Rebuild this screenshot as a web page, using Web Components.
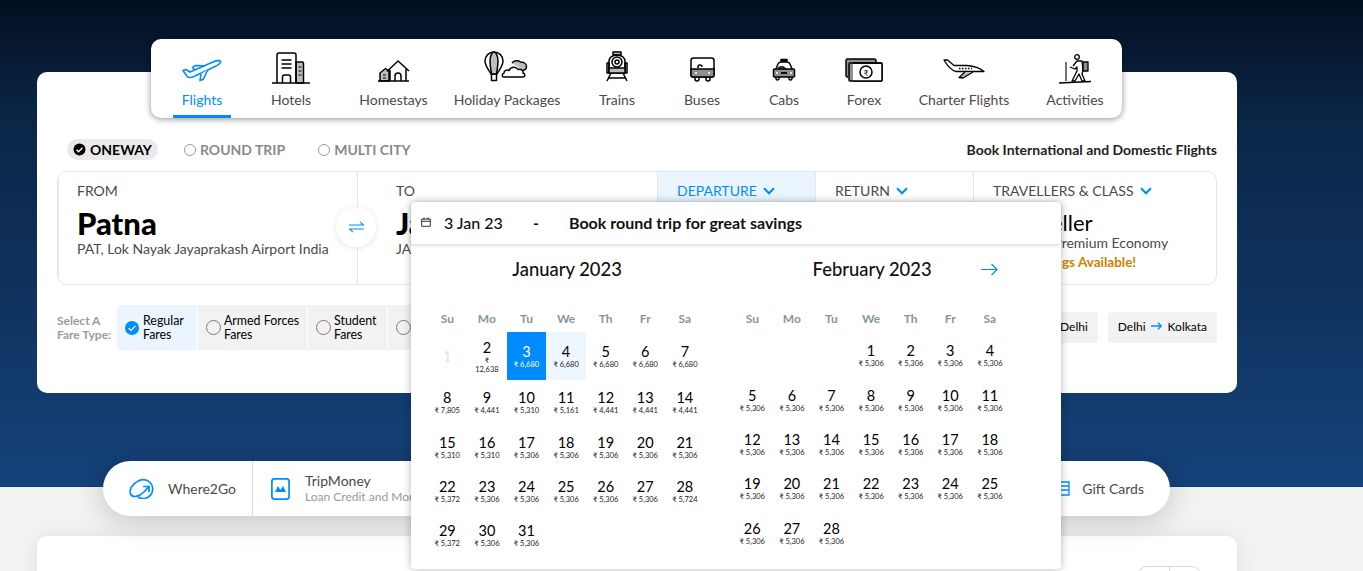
<!DOCTYPE html>
<html lang="en"><head><meta charset="utf-8"><title>Flights</title>
<style>html,body{margin:0;padding:0;background:#f2f2f2;font-family:Lato,"Noto Sans",sans-serif}</style></head>
<body>
<mmt-page></mmt-page>
<script>
const S='#000';
const ICONS={
flights:[40,24,2,`<g fill="none" stroke="#008cff" stroke-width="1.6" stroke-linejoin="round"><path d="M1 12.500 4 11.500 8 14 31 4C34 2.600 38 2 38.600 3.500 39 5.200 35.500 7.300 32.500 8.700L12 18.500C9 19.800 6 19.600 5 18.300Z"/><path d="M13 12.200 10.500 9.400 13.500 7.500 23 7.900"/><path d="M19 16 18 22.600 21 21.600 26 11.500" fill="#fff"/></g>`],
hotels:[38,32,0,`<g fill="none" stroke="${S}" stroke-width="1.500"><path d="M24 10h6a1.500 1.500 0 0 1 1.500 1.500V31H24Z" fill="#bdbdbd"/><path d="M5 31V3a2 2 0 0 1 2-2h15a2 2 0 0 1 2 2v28"/><path d="M9.500 8h10M9.500 12h10M9.500 16h10" stroke-width="1.700"/><path d="M10.500 31v-6a2 2 0 0 1 2-2h4a2 2 0 0 1 2 2v6"/><path d="M26.500 15h3M26.500 19h3M26.500 23h3" stroke-width="1.200"/><path d="M0 31h38"/></g>`],
homestays:[33,22,2,`<g fill="none" stroke="${S}" stroke-width="1.500" stroke-linejoin="round"><path d="M3 13 8.500 8.500 12 11V21H3Z" fill="#bdbdbd"/><path d="M10 11.500 21 1 32 11"/><path d="M13 10V21M29 9V21"/><path d="M18 21v-5a3 3 0 0 1 6 0v5"/><path d="M1 21h31"/><path d="M6 15h3M6 18h3" stroke-width="1.100"/></g>`],
holiday:[46,31,2,`<g fill="none" stroke="${S}" stroke-width="1.500" stroke-linejoin="round"><path d="M10 1C5 1 1 5 1 10c0 5 4 9 6 13h6c2-4 6-8 6-13 0-5-4-9-9-9Z"/><path d="M10 1C8 1 6 5 6 10c0 5 1 9 1.500 13h5C13 19 14 15 14 10c0-5-2-9-4-9Z" fill="#bdbdbd"/><path d="M7.500 23v6.500h5V23"/><path d="M28 12c2-2.500 6-3 8.500-1 3.500 0 6 2 6 4.500 0 2-1.500 3.500-3.500 4" fill="#bdbdbd"/><path d="M20 26c-2.500 0-2-3.500 0-4 0-2.500 3-3.500 5-2.500 1.500-4 7-4.500 9-1 3-1 5.500 1 5 3.500 2.500.5 2.500 4-.5 4Z" fill="#fff"/></g>`],
trains:[24,31,2,`<g fill="none" stroke="${S}" stroke-width="1.500" stroke-linejoin="round"><path d="M8 1h8v3H8Z" fill="#bdbdbd"/><path d="M4 22V10.500C4 7 7 4 12 4s8 3 8 6.500V22Z"/><path d="M2 12h2v10H2ZM20 12h2v10h-2Z"/><circle cx="12" cy="11" r="5"/><circle cx="12" cy="11" r="2"/><path d="M4 17h16v5H4Z" fill="#bdbdbd"/><path d="M6 22 2 30M18 22l4 8M4 27h16"/></g>`],
buses:[25,25,2,`<g fill="none" stroke="${S}" stroke-width="1.500"><rect x="1" y="1" width="23" height="19" rx="2.500"/><path d="M1 12h23v6.500a1.500 1.500 0 0 1-1.500 1.500h-20A1.500 1.500 0 0 1 1 18.500Z" fill="#8f8f8f"/><path d="M5 20v2a2 2 0 0 0 4 0v-2M16 20v2a2 2 0 0 0 4 0v-2"/><path d="M8 11v-1a2 2 0 0 1 4 0"/></g><circle cx="6" cy="16" r="1" fill="#fff"/><circle cx="19" cy="16" r="1" fill="#fff"/>`],
cabs:[24,23,3,`<g fill="none" stroke="${S}" stroke-width="1.500" stroke-linejoin="round"><path d="M9 4V1.500h6V4" fill="${S}"/><path d="M4 11 6 6a3 3 0 0 1 3-2h6a3 3 0 0 1 3 2l2 5"/><path d="M7 9.500c2-1 4-1 5 0l2 1.500h-7Z"/><path d="M2.500 11h19a1 1 0 0 1 1 1v6a1 1 0 0 1-1 1h-19a1 1 0 0 1-1-1v-6a1 1 0 0 1 1-1Z" fill="#8f8f8f"/><path d="M4 19v1.500a1.500 1.500 0 0 0 3 0V19M17 19v1.500a1.500 1.500 0 0 0 3 0V19"/><path d="M9 15h6" stroke-width="1.800"/></g><circle cx="5" cy="15" r="1" fill="#fff"/><circle cx="19" cy="15" r="1" fill="#fff"/>`],
forex:[38,24,2,`<g fill="none" stroke="${S}" stroke-width="1.500"><path d="M3 19H2.500A1.500 1.500 0 0 1 1 17.500V2.500A1.500 1.500 0 0 1 2.500 1h27A1.500 1.500 0 0 1 31 2.500V5" fill="#8f8f8f"/><rect x="4" y="5" width="33" height="18" rx="1" fill="#8f8f8f"/><rect x="8" y="6" width="29" height="17" fill="#fff" stroke="none"/><path d="M8 5h28a1 1 0 0 1 1 1v16a1 1 0 0 1-1 1H8"/><circle cx="21" cy="14" r="6"/></g><text x="21" y="17.500" text-anchor="middle" font-family="Lato,Noto Sans,sans-serif" font-size="8" fill="${S}">₹</text>`],
charter:[42,20,5,`<g fill="none" stroke="${S}" stroke-width="1.300" stroke-linejoin="round"><path d="M1 1 4.500 1 11 6.500 24 6.500C31 7 38 10 41 12.500H13C9 11.500 5 8 1 1Z"/><path d="M22 13 16 18.500 20 19 30 13" fill="#bdbdbd"/></g><path d="M16 9.500h13" stroke="${S}" stroke-width="1.300" stroke-dasharray="1.500 1.500" fill="none"/>`],
activities:[33,30,0,`<g fill="none" stroke="${S}" stroke-width="1.300" stroke-linejoin="round"><circle cx="18" cy="3" r="2.300"/><path d="M24 8h5v9h-5Z" fill="#8f8f8f"/><path d="M14 12 18 7h5l1 9-1 4 3 7h-3l-3-7-4 7h-3l5-10V13l-2 2-5-2"/><path d="M7 8v19" stroke-width="1.100"/><path d="M0 29 32 27.500" stroke-width="1.500"/></g>`]};

class Base extends HTMLElement{
  connectedCallback(){ if(this.shadowRoot) return; this.attachShadow({mode:'open'}).innerHTML=this.render(); }
  a(n,d=''){return this.getAttribute(n)??d}
}
customElements.define('nav-item',class extends Base{render(){
  const [w,h,lift,p]=ICONS[this.a('icon')];const active=this.hasAttribute('active');
  return `<style>
  :host{display:flex;flex:none;flex-direction:column;align-items:center;width:${this.a('w')}px;height:79px;box-sizing:border-box;padding-top:13px;color:${active?'#008cff':'#4a4a4a'};font-size:14px;${active?'border-bottom:3px solid #008cff;':''}}
  .i{height:32px;display:flex;align-items:flex-end;justify-content:center}
  svg{display:block;overflow:visible;margin-bottom:${lift}px}
  .l{margin-top:7px;line-height:17px;white-space:nowrap}
  </style><div class="i"><svg width="${w}" height="${h}" viewBox="0 0 ${w} ${h}">${p}</svg></div><div class="l"><slot></slot></div>`;}});

customElements.define('top-nav',class extends Base{render(){return `<style>
  :host{display:flex;width:971px;height:79px;box-sizing:border-box;padding-left:22px;background:#fff;border-radius:10px;box-shadow:0 1px 6px rgba(0,0,0,.45);margin:0 0 0 151px;position:relative;z-index:2}
  </style><slot></slot>`}});

customElements.define('trip-opt',class extends Base{render(){const on=this.hasAttribute('on');return `<style>
  :host{display:inline-flex;align-items:center;gap:4px;font-weight:700;font-size:14px;height:21px;border-radius:11px;color:${on?'#000':'#8a8a8a'};${on?'background:#eaeaea;padding:0 6px;':''}}
  .r{width:10px;height:10px;border:1px solid #9b9b9b;border-radius:50%;display:block}
  svg{display:block}
  </style>${on?`<svg width="13" height="13" viewBox="0 0 13 13"><circle cx="6.500" cy="6.500" r="6" fill="#000"/><path d="M3.600 6.700 5.600 8.700 9.400 4.800" fill="none" stroke="#fff" stroke-width="1.400"/></svg>`:'<span class="r"></span>'}<slot></slot>`}});

const CHEV=`<svg width="12" height="8" viewBox="0 0 12 8"><path d="M1 1.300 6 6.300 11 1.300" fill="none" stroke="#008cff" stroke-width="2"/></svg>`;
customElements.define('search-field',class extends Base{render(){const act=this.hasAttribute('active');const ch=this.hasAttribute('chevron');return `<style>
  :host{display:block;box-sizing:border-box;flex:none;width:${this.a('w')}px;padding:10px 19px 0;border-left:1px solid #e7e7e7;${act?'background:#eaf5ff;':''}}
  :host(:first-child){border-left:0}
  .l{font-size:14px;line-height:17px;color:${act?'#008cff':'#4a4a4a'};display:flex;align-items:center;gap:6px;white-space:nowrap}
  .m{font-size:${this.a('ms','31')}px;font-weight:${this.a('mw','900')};line-height:34px;color:#000;margin-top:7px;white-space:nowrap}
  .s{font-size:14px;line-height:16px;color:#4a4a4a;margin-top:${this.a('sm','1')}px;margin-left:var(--sx,0);white-space:nowrap}
  ::slotted([slot=x]){font-size:13.500px;font-weight:700;color:#cf8100;line-height:16px;display:block;margin-top:3px;white-space:nowrap}
  </style><div class="l">${this.a('label')}${ch?CHEV:''}</div><div class="m">${this.a('main')}</div><div class="s">${this.a('sub')}</div><slot name="x"></slot>`}});

customElements.define('swap-btn',class extends Base{render(){return `<style>
  :host{position:absolute;left:279px;top:36px;width:40px;height:40px;border-radius:50%;background:#fff;box-shadow:0 1px 7px rgba(0,0,0,.1);display:flex;align-items:center;justify-content:center}
  </style><svg width="15" height="12" viewBox="0 0 15 12"><path d="M0 4H14.500L11 .8M15 8H.5L4 11.200" fill="none" stroke="#008cff" stroke-width="1.100"/></svg>`}});

customElements.define('fare-chip',class extends Base{render(){const on=this.hasAttribute('on');return `<style>
  :host{display:flex;align-items:center;gap:${on?'4px':'3px'};flex:none;box-sizing:border-box;width:${this.a('w')}px;height:45px;padding-left:8px;background:${on?'#eaf5ff':'#f2f2f2'};font-size:12.400px;line-height:14px;color:#000;border-radius:${on?'4px 0 0 4px':'0'}}
  .r{flex:none;width:13px;height:13px;border:1px solid #7a7a7a;border-radius:50%}
  svg{flex:none;display:block}
  .t{padding-top:1px}
  </style>${on?`<svg width="14" height="14" viewBox="0 0 14 14"><circle cx="7" cy="7" r="7" fill="#008cff"/><path d="M3.500 7.200 6 9.500 10.500 4.800" fill="none" stroke="#fff" stroke-width="1.100"/></svg>`:'<span class="r"></span>'}<div class="t"><slot></slot></div>`}});

customElements.define('route-chip',class extends Base{render(){return `<style>
  :host{display:flex;align-items:center;gap:5.500px;flex:none;height:31px;box-sizing:border-box;padding:0 10px 3px;background:#f2f2f2;border-radius:4px;font-size:12px;color:#000;white-space:nowrap}
  </style>${this.a('from')}<svg width="11" height="8" viewBox="0 0 11 8"><path d="M0 4H10M7 .8 10.300 4 7 7.200" fill="none" stroke="#008cff" stroke-width="1.300"/></svg>${this.a('to')}`}});

customElements.define('search-card',class extends Base{render(){return `<style>
  :host{display:block;width:1200px;height:321px;box-sizing:border-box;margin:-46px 0 0 37px;padding:67px 20px 0;background:#fff;border-radius:10px;position:relative;z-index:1}
  .trip{display:flex;align-items:center;height:21px}
  .trip ::slotted(.g1){margin-left:26px}
  .trip ::slotted(.g2){margin-left:33px}
  .trip ::slotted(.tag){margin-left:auto;font-size:14px;font-weight:700;color:#222}
  .box{display:flex;height:114px;box-sizing:border-box;margin-top:11px;border:1px solid #e7e7e7;border-radius:10px;overflow:hidden}
  .wrap{position:relative}
  .fare{display:flex;align-items:center;gap:1px;margin-top:20px;height:45px}
  .fare ::slotted(.lbl){font-size:12px;font-weight:700;line-height:14px;color:#9b9b9b;width:59px;flex:none}
  .fare ::slotted(.sp){flex:1}
  .fare ::slotted(route-chip){margin-left:9px}
  </style>
  <div class="trip"><slot name="trip"></slot></div>
  <div class="wrap"><div class="box"><slot name="field"></slot></div><slot name="swap"></slot></div>
  <div class="fare"><slot name="fare"></slot></div>`}});

customElements.define('cal-day',class extends Base{render(){
  const st=this.a('st');const pr=this.a('price');const wrap=this.hasAttribute('wrap');
  return `<style>
  :host{display:flex;flex-direction:column;align-items:center;justify-content:center;box-sizing:border-box;min-height:${wrap?48:44.4}px;text-align:center;color:${st=='sel'?'#fff':st=='off'?'#dfe3e3':'#000'};background:${st=='sel'?'#008cff':st=='near'?'#eef6ff':'transparent'}}
  .n{font-size:14.500px;line-height:17px}
  .p{font-size:7.500px;line-height:9px;color:${st=='sel'?'#fff':'#222'}}
  </style><div class="n">${this.a('d')}</div>${pr?`<div class="p">${pr}</div>`:''}`}});

customElements.define('cal-month',class extends Base{render(){
  const start=+this.a('start'),days=+this.a('days');const P=JSON.parse(this.a('prices'));const base=this.a('base');
  let c='';for(const w of ['Su','Mo','Tu','We','Th','Fr','Sa'])c+=`<div class="w">${w}</div>`;
  for(let i=0;i<start;i++)c+='<span></span>';
  for(let d=1;d<=days;d++){
    const v=P[d]??base;let at=`d="${d}"`;
    if(v==='off')at+=' st="off"';else if(d==2&&v=='12,638')at+=` price="₹<br>12,638" wrap`;else at+=` price="₹ ${v}"`;
    if(this.a('sel')==d)at+=' st="sel"';if(this.a('near')==d)at+=' st="near"';
    c+=`<cal-day ${at}></cal-day>`;
  }
  return `<style>
  :host{display:block;width:277.200px;flex:none}
  .t{text-align:center;font-size:18.400px;font-weight:500;line-height:24px;color:#111;height:24px;padding-left:2px}
  .g{display:grid;grid-template-columns:repeat(7,39.600px);margin-top:31px}
  .w{font-size:12px;font-weight:700;color:#8a9696;text-align:center;line-height:14px;height:${this.a('wh')}px;}
  </style><div class="t"><slot></slot></div><div class="g">${c}</div>`}});

customElements.define('cal-popup',class extends Base{render(){return `<style>
  :host{position:absolute;left:411px;top:202px;width:650px;height:367px;background:#fff;border-radius:4px;box-shadow:0 0 9px rgba(0,0,0,.28);z-index:5;color:#111}
  .top{display:flex;align-items:center;height:42px;box-sizing:border-box;padding:0 0 2px 10px;box-shadow:0 1px 4px rgba(0,0,0,.18);font-size:16px;font-weight:700;border-radius:4px 4px 0 0;white-space:nowrap}
  .top svg{flex:none;margin-right:13px}
  .d{width:89px;font-weight:500;font-size:16px}
  .dash{width:36px}
  .ms{display:flex;padding:13px 0 0 16.500px;gap:27.800px;position:relative}
  .arrow{position:absolute;left:570px;top:19px}
  </style>
  <div class="top"><svg width="10" height="10" viewBox="0 0 10 10"><path d="M.7 2h8.600v7.300H.7ZM.7 4.300h8.600M3 .5v2.500M7 .5v2.500" fill="none" stroke="#333" stroke-width="1"/></svg><span class="d">3 Jan 23</span><span class="dash">-</span><span>Book round trip for great savings</span></div>
  <div class="ms"><slot></slot><svg class="arrow" width="17" height="13" viewBox="0 0 17 13"><path d="M0 6.500H16M10.500 1 16 6.500 10.500 12" fill="none" stroke="#008cff" stroke-width="1.200"/></svg></div>`}});

customElements.define('promo-pill',class extends Base{render(){return `<style>
  :host{display:flex;width:1067px;height:55px;box-sizing:border-box;margin:-26px 0 0 103px;background:#fff;border-radius:28px;position:relative;z-index:1;box-shadow:0 4px 30px rgba(0,0,0,.2);align-items:stretch;color:#4a4a4a}
  ::slotted(.last){margin-left:auto}
  </style><slot></slot>`}});
customElements.define('promo-item',class extends Base{render(){const sub=this.a('sub');return `<style>
  :host{display:flex;align-items:center;box-sizing:border-box;flex:none;padding:${this.a('pad')};${this.hasAttribute('bar')?'border-right:1px solid #dcdcdc;':''}font-size:14px}
  .t{line-height:16px;white-space:nowrap}
  small{display:block;font-size:12px;color:#9b9b9b;line-height:16px;white-space:nowrap}
  </style><slot name="i"></slot><div class="t"><slot></slot>${sub?`<small>${sub}</small>`:''}</div>`}});

customElements.define('lower-card',class extends Base{render(){return `<style>
  :host{display:block;width:1200px;height:80px;margin:20px 0 0 37px;background:#fff;border-radius:10px;position:relative;box-shadow:0 1px 20px rgba(0,0,0,.08)}
  .sw{position:absolute;right:35px;top:30px;width:65px;height:30px;border:1px solid #d8d8d8;border-radius:10px;box-sizing:border-box;display:flex}
  .sw i{flex:1;border-left:1px solid #d8d8d8}.sw i:first-child{border:0}
  </style><div class="sw"><i></i><i></i></div>`}});

customElements.define('mmt-page',class extends Base{render(){
  const jan=JSON.stringify({1:'off',2:'12,638',3:'6,680',4:'6,680',5:'6,680',6:'6,680',7:'6,680',8:'7,805',9:'4,441',10:'5,310',11:'5,161',12:'4,441',13:'4,441',14:'4,441',15:'5,310',16:'5,310',22:'5,372',28:'5,724',29:'5,372'});
  return `<style>
  :host{display:block;position:relative;width:1363px;height:571px;overflow:hidden;background:#f2f2f2;font-family:Lato,"Noto Sans",sans-serif}
  .hero{height:487px;box-sizing:border-box;padding-top:39px;background:linear-gradient(180deg,#030f20 0,#0a2444 22%,#15427a 100%);border-bottom:1px solid #0c3a80}
  </style>
  <div class="hero">
    <top-nav>
      <nav-item icon="flights" w="58" active>Flights</nav-item>
      <nav-item icon="hotels" w="120">Hotels</nav-item>
      <nav-item icon="homestays" w="85">Homestays</nav-item>
      <nav-item icon="holiday" w="142">Holiday Packages</nav-item>
      <nav-item icon="trains" w="78">Trains</nav-item>
      <nav-item icon="buses" w="92">Buses</nav-item>
      <nav-item icon="cabs" w="72">Cabs</nav-item>
      <nav-item icon="forex" w="88">Forex</nav-item>
      <nav-item icon="charter" w="112">Charter Flights</nav-item>
      <nav-item icon="activities" w="110">Activities</nav-item>
    </top-nav>
    <search-card>
      <trip-opt slot="trip" on style="margin-left:10px">ONEWAY</trip-opt>
      <trip-opt slot="trip" class="g1">ROUND TRIP</trip-opt>
      <trip-opt slot="trip" class="g2">MULTI CITY</trip-opt>
      <span slot="trip" class="tag">Book International and Domestic Flights</span>
      <search-field slot="field" w="299" style="padding-left:18px" label="FROM" main="Patna" sub="PAT, Lok Nayak Jayaprakash Airport India"></search-field>
      <search-field slot="field" w="300" style="padding-left:38px" label="TO" main="Jaipur" sub="JAI, Jaipur Airport India"></search-field>
      <search-field slot="field" w="158" active chevron label="DEPARTURE"></search-field>
      <search-field slot="field" w="158" chevron label="RETURN"></search-field>
      <search-field slot="field" w="243" chevron label="TRAVELLERS &amp; CLASS" main="1 Traveller" ms="22" mw="400" sm="-5" style="--sx:-2px" sub="Economy/Premium Economy"><span slot="x">Great Savings Available!</span></search-field>
      <swap-btn slot="swap"></swap-btn>
      <span slot="fare" class="lbl">Select A<br>Fare Type:</span>
      <fare-chip slot="fare" on w="80">Regular<br>Fares</fare-chip>
      <fare-chip slot="fare" w="109">Armed Forces<br>Fares</fare-chip>
      <fare-chip slot="fare" w="79">Student<br>Fares</fare-chip>
      <fare-chip slot="fare" w="110"></fare-chip>
      <span slot="fare" class="sp"></span>
      <route-chip slot="fare" from="Mumbai" to="Delhi"></route-chip>
      <route-chip slot="fare" from="Delhi" to="Kolkata"></route-chip>
    </search-card>
  </div>
  <promo-pill>
    <promo-item pad="0 16px 0 26px" bar><svg slot="i" width="26" height="21" viewBox="0 0 26 21" style="margin-right:13px;display:block"><g fill="none" stroke="#008cff" stroke-width="1.700"><path d="M8.500 3.500A9.500 9.500 0 1 1 9 19"/><path d="M8.500 3.500C3 6 0 12 1.500 16 3.500 20 10 19 15 14L19.500 9"/><path d="M14 8.500H20V14"/></g></svg>Where2Go</promo-item>
    <promo-item pad="0 0 0 18px" sub="Loan Credit and More"><svg slot="i" width="19" height="22" viewBox="0 0 19 22" style="margin-right:15px;display:block"><rect x=".9" y=".9" width="17.200" height="20.200" rx="2.500" fill="#fff" stroke="#008cff" stroke-width="1.700"/><path d="M4 14 7 8 9.500 12 12 8 15 14Z" fill="#008cff"/></svg>TripMoney</promo-item>
    <promo-item class="last" pad="0 26px 0 0"><svg slot="i" width="12" height="15" viewBox="0 0 12 15" style="margin-right:12px;display:block"><path d="M1 1H11V14H1ZM1 5H11M1 9H11" fill="none" stroke="#008cff" stroke-width="1.300"/></svg>Gift Cards</promo-item>
  </promo-pill>
  <lower-card></lower-card>
  <cal-popup>
    <cal-month start="0" days="31" base="5,306" prices='${jan}' sel="3" near="4" wh="20">January 2023</cal-month>
    <cal-month start="3" days="28" base="5,306" prices='{}' wh="21">February 2023</cal-month>
  </cal-popup>`}});
</script>
</body></html>
